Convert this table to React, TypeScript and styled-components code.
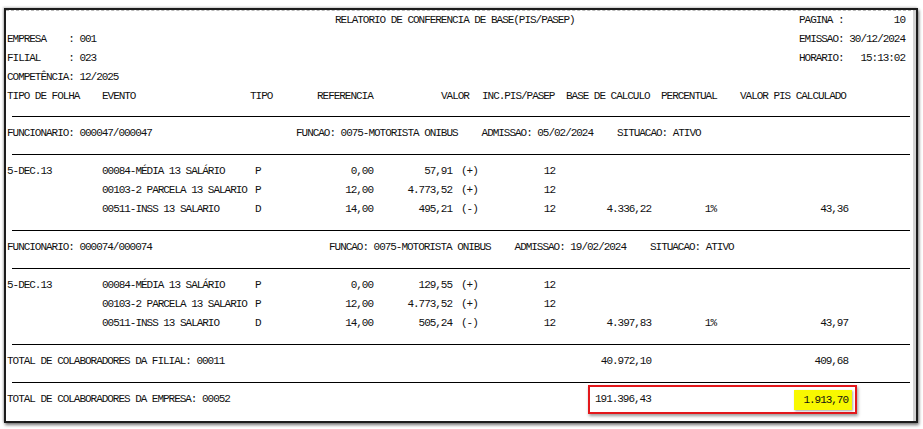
import styled, { createGlobalStyle } from "styled-components";

const GlobalStyle = createGlobalStyle`
  html, body {
    margin: 0;
    padding: 0;
    background: #fff;
  }
  body {
    width: 923px;
    height: 429px;
    overflow: hidden;
  }
`;

const Screen = styled.div`
  width: 923px;
  height: 429px;
  box-sizing: border-box;
  padding: 8px 0 0 4px;
  background: #fff;
`;

const Sheet = styled.div`
  width: 914px;
  height: 415px;
  box-sizing: border-box;
  border: 2px solid #1c1c1c;
  box-shadow: 1px 2px 3px rgba(0, 0, 0, 0.55), -1px -1px 2px rgba(0, 0, 0, 0.2);
  background: #fff;
  display: flex;
  font-family: "Liberation Mono", "DejaVu Sans Mono", monospace;
  font-size: 11px;
  letter-spacing: -1.03px;
  color: #111;
`;

const Paper = styled.div`
  flex: 1;
  border-top: 1px dashed #b8b8b8;
  border-right: 3px solid #d2d2d2;
  padding-left: 1px;
`;

const TopArea = styled.div`
  display: grid;
  grid-template-columns: 328px 464px 106px;
  grid-template-rows: repeat(4, 19px);
  line-height: 19px;
  white-space: pre;
`;

const InfoLine = styled.div<{ $row: number }>`
  grid-column: 1;
  grid-row: ${(p) => p.$row};
`;

const Title = styled.div`
  grid-column: 2;
  grid-row: 1;
`;

const Stamp = styled.div<{ $row: number }>`
  grid-column: 3;
  grid-row: ${(p) => p.$row};
  display: flex;
  justify-content: space-between;
`;

const HeaderRow = styled.div`
  display: grid;
  grid-template-columns: 95px 148px 67px 124px 41px 84px 95px 79px 1fr;
  height: 19px;
  line-height: 19px;
  white-space: pre;
`;

const Rule = styled.div<{ $gap?: number }>`
  height: 1px;
  background: #000;
  margin: ${(p) => p.$gap ?? 0}px 3px 0 5px;
`;

const Section = styled.div`
  padding: 7px 0 11px;
`;

const EmployeeRow = styled.div<{ $lead: number }>`
  display: flex;
  column-gap: 24px;
  height: 19px;
  line-height: 19px;
  white-space: pre;

  & > span:first-child {
    width: ${(p) => p.$lead - 24}px;
  }
`;

const DataRow = styled.div`
  display: grid;
  grid-template-columns: 95px 153px 45px 73px 79px 28px 75px 96px 65px 132px;
  height: 19px;
  line-height: 19px;
  white-space: pre;
`;

const Cell = styled.span<{ $right?: boolean; $pad?: number; $span?: string }>`
  text-align: ${(p) => (p.$right ? "right" : "left")};
  padding-left: ${(p) => p.$pad ?? 0}px;
  grid-column: ${(p) => p.$span ?? "auto"};
`;

const TotalsBox = styled.div`
  grid-column: 8 / 11;
  margin: -5px -9px -5px 33px;
  height: 29px;
  box-sizing: border-box;
  border: 2px solid #e3171b;
  box-shadow: 1px 2px 3px rgba(0, 0, 0, 0.4);
  display: flex;
  align-items: center;
  justify-content: space-between;
  padding: 0 3px 0 5px;
`;

const Marker = styled.span`
  background: #f8f800;
  height: 20px;
  line-height: 20px;
  padding: 0 4px 0 9px;
  box-shadow: 1px 1px 2px rgba(0, 0, 0, 0.35);
`;

type Entry = {
  folha: string;
  evento: string;
  tipo: string;
  ref: string;
  valor: string;
  sinal: string;
  inc: string;
  base?: string;
  pct?: string;
  pis?: string;
};

type Employee = {
  id: string;
  lead: number;
  funcao: string;
  admissao: string;
  entries: Entry[];
};

const employees: Employee[] = [
  {
    id: "000047/000047",
    lead: 289,
    funcao: "0075-MOTORISTA ONIBUS",
    admissao: "05/02/2024",
    entries: [
      { folha: "5-DEC.13", evento: "00084-MÉDIA 13 SALÁRIO", tipo: "P", ref: "0,00", valor: "57,91", sinal: "(+)", inc: "12" },
      { folha: "", evento: "00103-2 PARCELA 13 SALARIO", tipo: "P", ref: "12,00", valor: "4.773,52", sinal: "(+)", inc: "12" },
      { folha: "", evento: "00511-INSS 13 SALARIO", tipo: "D", ref: "14,00", valor: "495,21", sinal: "(-)", inc: "12", base: "4.336,22", pct: "1%", pis: "43,36" },
    ],
  },
  {
    id: "000074/000074",
    lead: 322,
    funcao: "0075-MOTORISTA ONIBUS",
    admissao: "19/02/2024",
    entries: [
      { folha: "5-DEC.13", evento: "00084-MÉDIA 13 SALÁRIO", tipo: "P", ref: "0,00", valor: "129,55", sinal: "(+)", inc: "12" },
      { folha: "", evento: "00103-2 PARCELA 13 SALARIO", tipo: "P", ref: "12,00", valor: "4.773,52", sinal: "(+)", inc: "12" },
      { folha: "", evento: "00511-INSS 13 SALARIO", tipo: "D", ref: "14,00", valor: "505,24", sinal: "(-)", inc: "12", base: "4.397,83", pct: "1%", pis: "43,97" },
    ],
  },
];

const headers = [
  "TIPO DE FOLHA",
  "EVENTO",
  "TIPO",
  "REFERENCIA",
  "VALOR",
  "INC.PIS/PASEP",
  "BASE DE CALCULO",
  "PERCENTUAL",
  "VALOR PIS CALCULADO",
];

const App = () => {
  return (
    <Screen>
      <GlobalStyle />
      <Sheet>
        <Paper>
          <TopArea>
            <Title>RELATORIO DE CONFERENCIA DE BASE(PIS/PASEP)</Title>
            <InfoLine $row={2}>EMPRESA    : 001</InfoLine>
            <InfoLine $row={3}>FILIAL     : 023</InfoLine>
            <InfoLine $row={4}>COMPETÊNCIA: 12/2025</InfoLine>
            <Stamp $row={1}>
              <span>PAGINA :</span>
              <span>10</span>
            </Stamp>
            <Stamp $row={2}>
              <span>EMISSAO:</span>
              <span>30/12/2024</span>
            </Stamp>
            <Stamp $row={3}>
              <span>HORARIO:</span>
              <span>15:13:02</span>
            </Stamp>
          </TopArea>
          <HeaderRow>
            {headers.map((h) => (
              <span key={h}>{h}</span>
            ))}
          </HeaderRow>

          {employees.map((emp, i) => (
            <div key={emp.id}>
              <Rule $gap={i === 0 ? 10 : 0} />
              <Section>
                <EmployeeRow $lead={emp.lead}>
                  <span>FUNCIONARIO: {emp.id}</span>
                  <span>FUNCAO: {emp.funcao}</span>
                  <span>ADMISSAO: {emp.admissao}</span>
                  <span>SITUACAO: ATIVO</span>
                </EmployeeRow>
              </Section>
              <Rule />
              <Section>
                {emp.entries.map((e) => (
                  <DataRow key={e.evento}>
                    <Cell>{e.folha}</Cell>
                    <Cell>{e.evento}</Cell>
                    <Cell>{e.tipo}</Cell>
                    <Cell $right>{e.ref}</Cell>
                    <Cell $right>{e.valor}</Cell>
                    <Cell $pad={9}>{e.sinal}</Cell>
                    <Cell $right>{e.inc}</Cell>
                    <Cell $right>{e.base ?? ""}</Cell>
                    <Cell $right>{e.pct ?? ""}</Cell>
                    <Cell $right>{e.pis ?? ""}</Cell>
                  </DataRow>
                ))}
              </Section>
            </div>
          ))}

          <Rule />
          <Section>
            <DataRow>
              <Cell $span="1 / 8">TOTAL DE COLABORADORES DA FILIAL: 00011</Cell>
              <Cell $right>40.972,10</Cell>
              <Cell />
              <Cell $right>409,68</Cell>
            </DataRow>
          </Section>
          <Rule />
          <Section>
            <DataRow>
              <Cell $span="1 / 8">TOTAL DE COLABORADORES DA EMPRESA: 00052</Cell>
              <TotalsBox>
                <span>191.396,43</span>
                <Marker>1.913,70</Marker>
              </TotalsBox>
            </DataRow>
          </Section>
        </Paper>
      </Sheet>
    </Screen>
  );
};

export default App;
